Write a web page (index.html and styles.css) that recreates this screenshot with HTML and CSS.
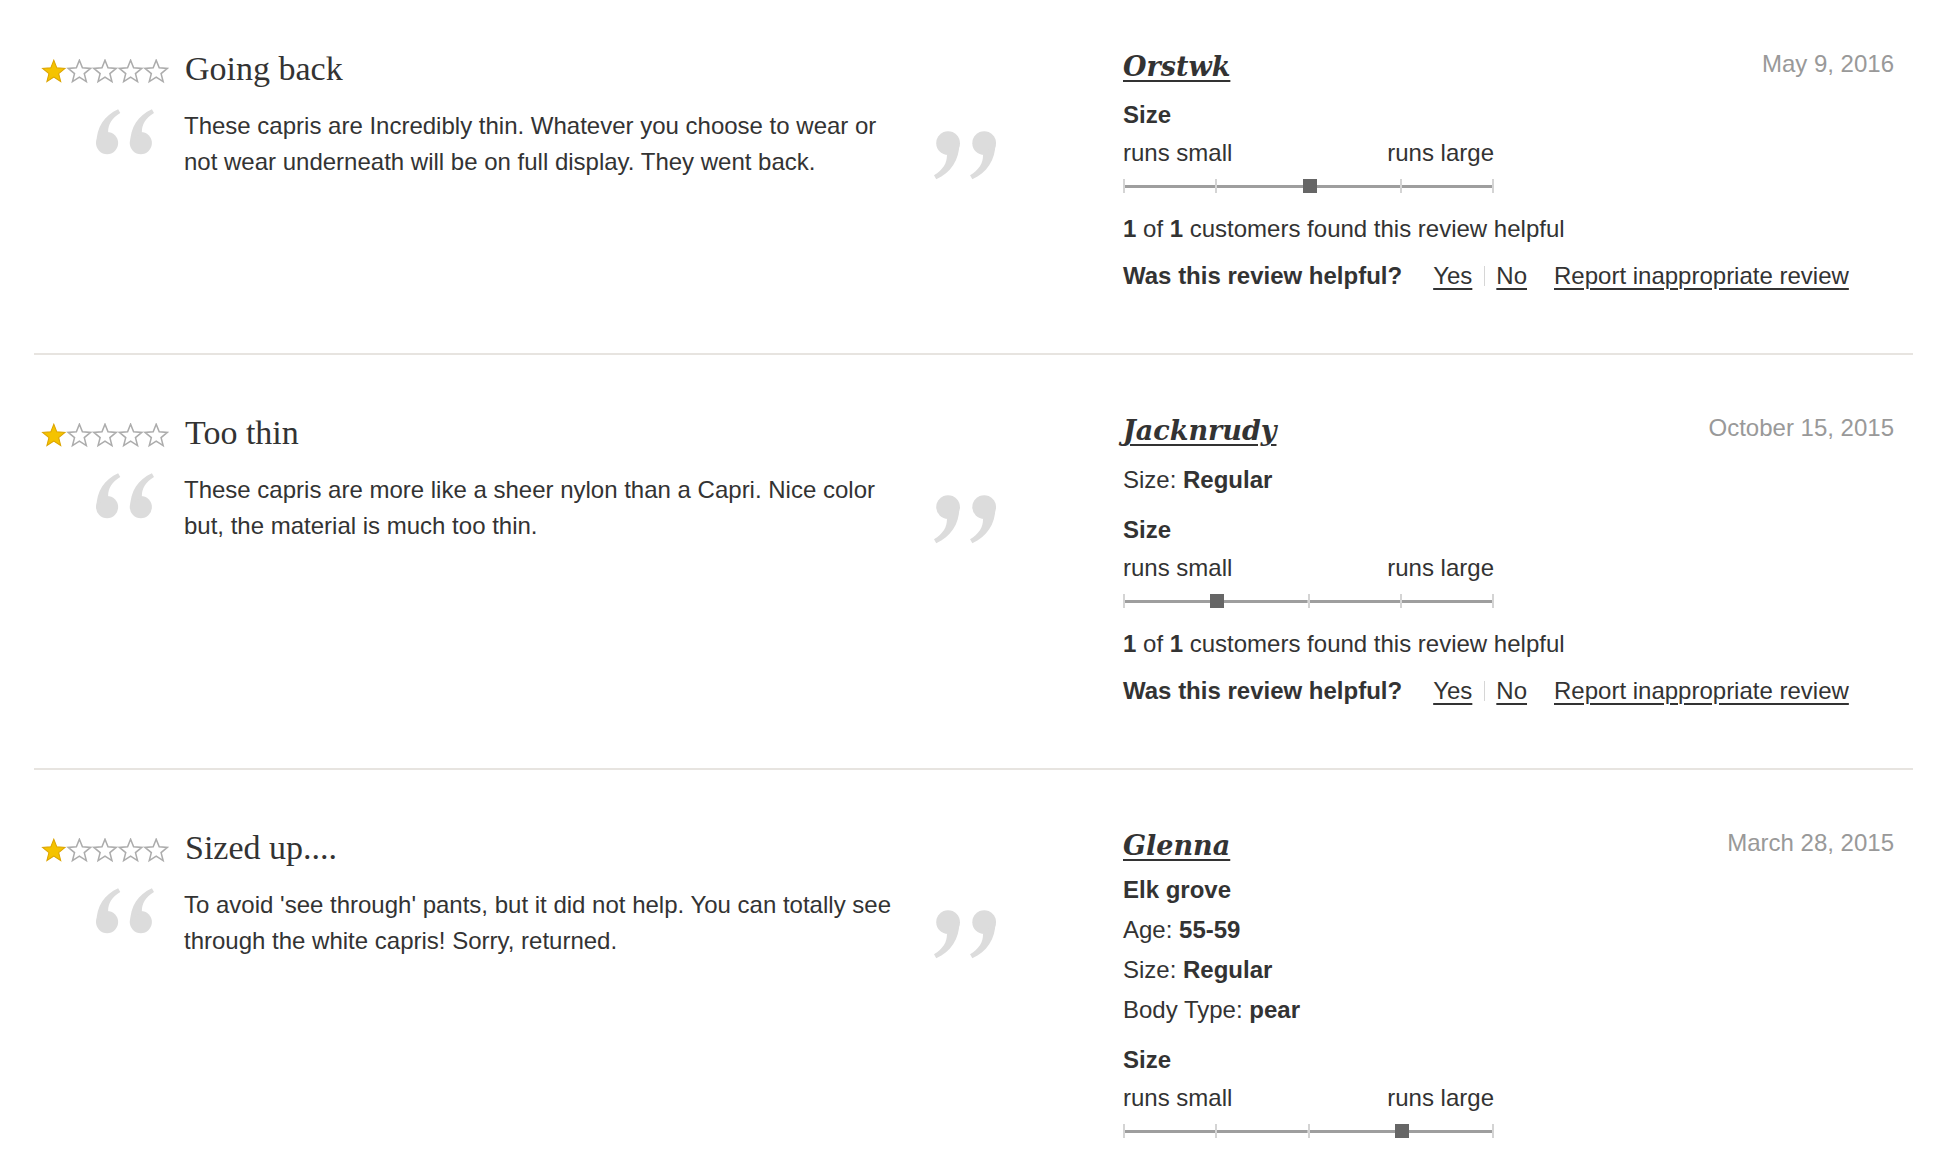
FILE: index.html
```html
<!DOCTYPE html>
<html lang="en">
<head>
<meta charset="utf-8">
<title>Reviews</title>
<link rel="stylesheet" href="styles.css">
</head>
<body>
<svg class="defs" width="0" height="0" aria-hidden="true">
  <defs>
    <polygon id="star" points="12.5,1 15.44,8.45 23.44,8.95 17.26,14.05 19.26,21.8 12.5,17.5 5.74,21.8 7.74,14.05 1.56,8.95 9.56,8.45"/>
    <g id="qmark">
      <circle cx="10.5" cy="32" r="10.5"/>
      <path d="M0.5 32 C0.5 17 8 6 21 0 L23 3.5 C15 8.5 11.5 14 11.5 21.5 Z"/>
    </g>
    <g id="quote">
      <use href="#qmark"/>
      <use href="#qmark" transform="translate(32 0)"/>
    </g>
    <g id="stars1">
      <use href="#star" class="full"/>
      <use href="#star" class="empty" transform="translate(25 0)"/>
      <use href="#star" class="empty" transform="translate(50 0)"/>
      <use href="#star" class="empty" transform="translate(75 0)"/>
      <use href="#star" class="empty" transform="translate(100 0)"/>
    </g>
  </defs>
</svg>

<main class="reviews">
  <article class="review">
    <div class="left">
      <div class="head">
        <svg class="stars" viewBox="0 0 125 24"><use href="#stars1"/></svg>
        <h3 class="title">Going back</h3>
      </div>
      <div class="quote">
        <svg class="q-open" viewBox="0 0 55 43"><use href="#quote"/></svg>
        <p class="text">These capris are Incredibly thin. Whatever you choose to wear or not wear underneath will be on full display. They went back.</p>
        <svg class="q-close" viewBox="0 0 55 43"><use href="#quote" transform="rotate(180 27.5 21.5)"/></svg>
      </div>
    </div>
    <div class="right">
      <div class="rhead"><a class="user" href="#">Orstwk</a><span class="date">May 9, 2016</span></div>
      <div class="fit">
        <div class="fit-label">Size</div>
        <div class="fit-range"><span>runs small</span><span>runs large</span></div>
        <div class="slider"><span class="seg"></span><span class="seg"></span><span class="seg"></span><span class="seg"></span><span class="mark" style="left:50%"></span></div>
      </div>
      <p class="count"><b>1</b> of <b>1</b> customers found this review helpful</p>
      <div class="vote"><b>Was this review helpful?</b><a class="yes" href="#">Yes</a><span class="pipe"></span><a class="no" href="#">No</a><a class="report" href="#">Report inappropriate review</a></div>
    </div>
  </article>

  <article class="review">
    <div class="left">
      <div class="head">
        <svg class="stars" viewBox="0 0 125 24"><use href="#stars1"/></svg>
        <h3 class="title">Too thin</h3>
      </div>
      <div class="quote">
        <svg class="q-open" viewBox="0 0 55 43"><use href="#quote"/></svg>
        <p class="text">These capris are more like a sheer nylon than a Capri. Nice color but, the material is much too thin.</p>
        <svg class="q-close" viewBox="0 0 55 43"><use href="#quote" transform="rotate(180 27.5 21.5)"/></svg>
      </div>
    </div>
    <div class="right">
      <div class="rhead"><a class="user" href="#">Jacknrudy</a><span class="date">October 15, 2015</span></div>
      <div class="attrs">
        <div class="attr">Size: <b>Regular</b></div>
      </div>
      <div class="fit">
        <div class="fit-label">Size</div>
        <div class="fit-range"><span>runs small</span><span>runs large</span></div>
        <div class="slider"><span class="seg"></span><span class="seg"></span><span class="seg"></span><span class="seg"></span><span class="mark" style="left:25%"></span></div>
      </div>
      <p class="count"><b>1</b> of <b>1</b> customers found this review helpful</p>
      <div class="vote"><b>Was this review helpful?</b><a class="yes" href="#">Yes</a><span class="pipe"></span><a class="no" href="#">No</a><a class="report" href="#">Report inappropriate review</a></div>
    </div>
  </article>

  <article class="review">
    <div class="left">
      <div class="head">
        <svg class="stars" viewBox="0 0 125 24"><use href="#stars1"/></svg>
        <h3 class="title">Sized up....</h3>
      </div>
      <div class="quote">
        <svg class="q-open" viewBox="0 0 55 43"><use href="#quote"/></svg>
        <p class="text">To avoid 'see through' pants, but it did not help. You can totally see through the white capris! Sorry, returned.</p>
        <svg class="q-close" viewBox="0 0 55 43"><use href="#quote" transform="rotate(180 27.5 21.5)"/></svg>
      </div>
    </div>
    <div class="right">
      <div class="rhead"><a class="user" href="#">Glenna</a><span class="date">March 28, 2015</span></div>
      <div class="attrs">
        <div class="attr loc"><b>Elk grove</b></div>
        <div class="attr">Age: <b>55-59</b></div>
        <div class="attr">Size: <b>Regular</b></div>
        <div class="attr">Body Type: <b>pear</b></div>
      </div>
      <div class="fit">
        <div class="fit-label">Size</div>
        <div class="fit-range"><span>runs small</span><span>runs large</span></div>
        <div class="slider"><span class="seg"></span><span class="seg"></span><span class="seg"></span><span class="seg"></span><span class="mark" style="left:75%"></span></div>
      </div>
    </div>
  </article>
</main>
</body>
</html>
```

FILE: styles.css
```css
html, body {
  margin: 0;
  padding: 0;
  background: #fff;
}

body {
  font-family: "Liberation Sans", Arial, sans-serif;
  font-size: 24px;
  color: #333;
}

.defs {
  position: absolute;
  width: 0;
  height: 0;
  overflow: hidden;
}

.full {
  fill: #f5c300;
  stroke: #dca400;
  stroke-width: 1;
}

.empty {
  fill: #fff;
  stroke: #acacac;
  stroke-width: 1.5;
}

.reviews {
  margin-left: 34px;
  width: 1879px;
}

.review {
  display: grid;
  grid-template-columns: 1082px 1fr;
  padding: 58px 19px 59px 7px;
  border-bottom: 2px solid #e7e4e0;
}

.review:first-child {
  padding-top: 49px;
}

/* left column */
.head {
  display: flex;
  align-items: center;
  gap: 16px;
  height: 40px;
}

.stars {
  width: 128px;
  height: 25px;
  margin-top: 5px;
  flex: none;
}

.title {
  margin: 0;
  font-family: "Liberation Serif", Georgia, serif;
  font-weight: normal;
  font-size: 34px;
  line-height: 40px;
  color: #333;
}

.quote {
  display: grid;
  grid-template-columns: 58px 720px 62px;
  column-gap: 30px;
  padding-left: 55px;
  margin-top: 19px;
  align-items: start;
}

.q-open {
  width: 58px;
  height: 46px;
  margin-top: 1px;
  fill: #dcdcdc;
}

.q-close {
  width: 62px;
  height: 50px;
  margin-top: 22px;
  fill: #dcdcdc;
}

.text {
  margin: 0;
  line-height: 36px;
}

/* right column */
.rhead {
  display: flex;
  justify-content: space-between;
  align-items: flex-start;
  height: 36px;
}

.user {
  font-family: "DejaVu Serif", Georgia, serif;
  font-style: italic;
  font-weight: bold;
  font-size: 27px;
  line-height: 36px;
  color: #333;
  text-decoration: underline;
  text-decoration-thickness: 2px;
  text-underline-offset: 4px;
}

.date {
  color: #999;
  line-height: 36px;
  margin-top: -3px;
}

.attrs {
  margin-top: 11px;
  line-height: 40px;
}

.attr.loc {
  margin-top: -5px;
}

.fit {
  margin-top: 12px;
  width: 371px;
}

.fit-label {
  font-weight: bold;
  line-height: 36px;
}

.fit-range {
  display: flex;
  justify-content: space-between;
  line-height: 36px;
  margin-top: 2px;
}

.slider {
  position: relative;
  display: flex;
  height: 14px;
  margin-top: 8px;
}

.seg {
  flex: 1;
  border-left: 2px solid #d4d4d4;
  background: linear-gradient(#9e9e9e, #9e9e9e) center / 100% 3px no-repeat;
}

.seg:nth-child(4) {
  border-right: 2px solid #d4d4d4;
}

.mark {
  position: absolute;
  top: 0;
  width: 14px;
  height: 14px;
  margin-left: -6px;
  background: #666;
}

.count {
  margin: 18px 0 0;
  line-height: 36px;
}

.vote {
  display: flex;
  align-items: center;
  margin-top: 11px;
  line-height: 36px;
}

.vote a {
  color: #333;
  text-decoration: underline;
  text-decoration-thickness: 2px;
  text-underline-offset: 4px;
}

.yes {
  margin-left: 31px;
}

.pipe {
  width: 1px;
  height: 20px;
  background: #d6d6d6;
  margin-left: 12px;
}

.no {
  margin-left: 11px;
}

.report {
  margin-left: 27px;
}
```
